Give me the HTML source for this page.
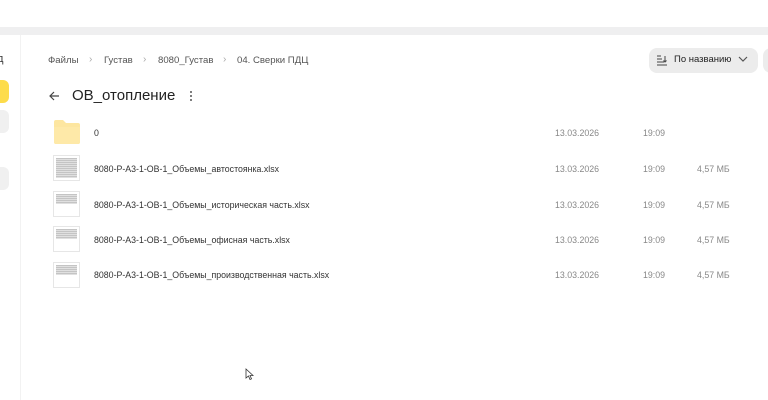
<!DOCTYPE html>
<html><head><meta charset="utf-8"><style>
*{margin:0;padding:0;box-sizing:border-box}
body{width:768px;height:400px;overflow:hidden;background:#fff;font-family:"Liberation Sans","Noto Sans CJK SC",sans-serif;position:relative;color:#222}
.a{position:absolute}
.band{left:0;top:27px;width:768px;height:8px;background:#efeff0}
.sep{left:20px;top:35px;width:1px;height:365px;background:#f2f2f2}
.crumb{top:55px;font-size:9.6px;color:#555}
.chev{top:54px;font-size:10px;color:#aaa}
.row{font-size:8.8px;color:#333}
.meta{font-size:8.8px;color:#888}
.thumb{left:53px;width:27px;height:26px;border:1px solid #e6e6e6;background:#fff}
.thumb i{position:absolute;left:2px;top:2px;width:21px;height:10px;background:repeating-linear-gradient(#c4c4c4 0 1px,#e0e0e0 1px 2px)}
</style></head><body>
<div class="a band"></div>
<div class="a sep"></div>
<div class="a" style="left:-3px;top:53px;font-size:11px;color:#333">д</div>
<div class="a" style="left:-10px;top:80px;width:19px;height:23px;border-radius:6px;background:#fddc4b"></div>
<div class="a" style="left:-10px;top:110px;width:19px;height:23px;border-radius:6px;background:#f0f0f0"></div>
<div class="a" style="left:-10px;top:167px;width:19px;height:23px;border-radius:6px;background:#f0f0f0"></div>

<div class="a crumb" style="left:48px">Файлы</div>
<div class="a chev" style="left:89px">›</div>
<div class="a crumb" style="left:104px">Густав</div>
<div class="a chev" style="left:143px">›</div>
<div class="a crumb" style="left:158px">8080_Густав</div>
<div class="a chev" style="left:223px">›</div>
<div class="a crumb" style="left:237px">04. Сверки ПДЦ</div>

<svg class="a" style="left:48px;top:90px" width="12" height="12" viewBox="0 0 12 12"><path d="M11 6H2M6 2L2 6l4 4" stroke="#444" stroke-width="1.2" fill="none"/></svg>
<div class="a" style="left:72px;top:87px;font-size:15px;color:#222">ОВ_отопление</div>
<svg class="a" style="left:189px;top:90px" width="4" height="12"><circle cx="2" cy="2" r="1" fill="#555"/><circle cx="2" cy="6" r="1" fill="#555"/><circle cx="2" cy="10" r="1" fill="#555"/></svg>

<div class="a" style="left:649px;top:48px;width:109px;height:25px;border-radius:8px;background:#ececec"></div>
<svg class="a" style="left:656px;top:54px" width="12" height="12" viewBox="0 0 12 12"><path d="M1 2h4M1 5h5M1 8h7M1 11h10M9 2v6M7.5 6.5L9 8l1.5-1.5" stroke="#444" stroke-width="1" fill="none"/></svg>
<div class="a" style="left:674px;top:54px;font-size:9.5px;color:#222">По названию</div>
<svg class="a" style="left:738px;top:56px" width="10" height="7"><path d="M1 1l4 4 4-4" stroke="#555" stroke-width="1.2" fill="none"/></svg>
<div class="a" style="left:763px;top:48px;width:20px;height:25px;border-radius:8px;background:#ececec"></div>

<svg class="a" style="left:53px;top:119px" width="28" height="26" viewBox="0 0 28 26"><path d="M1 3a2 2 0 0 1 2-2h7l3 3h12a2 2 0 0 1 2 2v17a2 2 0 0 1-2 2H3a2 2 0 0 1-2-2z" fill="#fde6a0"/><path d="M1 8h26v15a2 2 0 0 1-2 2H3a2 2 0 0 1-2-2z" fill="#fee9a8"/></svg>
<div class="a row" style="left:94px;top:128px">0</div>
<div class="a meta" style="left:555px;top:128px">13.03.2026</div>
<div class="a meta" style="left:643px;top:128px">19:09</div>

<div class="a thumb" style="top:155px"><i style="height:20px"></i></div>
<div class="a row" style="left:94px;top:164px">8080-Р-А3-1-ОВ-1_Объемы_автостоянка.xlsx</div>
<div class="a meta" style="left:555px;top:164px">13.03.2026</div><div class="a meta" style="left:643px;top:164px">19:09</div><div class="a meta" style="left:697px;top:164px">4,57 МБ</div>

<div class="a thumb" style="top:191px"><i></i></div>
<div class="a row" style="left:94px;top:200px">8080-Р-А3-1-ОВ-1_Объемы_историческая часть.xlsx</div>
<div class="a meta" style="left:555px;top:200px">13.03.2026</div><div class="a meta" style="left:643px;top:200px">19:09</div><div class="a meta" style="left:697px;top:200px">4,57 МБ</div>

<div class="a thumb" style="top:226px"><i></i></div>
<div class="a row" style="left:94px;top:235px">8080-Р-А3-1-ОВ-1_Объемы_офисная часть.xlsx</div>
<div class="a meta" style="left:555px;top:235px">13.03.2026</div><div class="a meta" style="left:643px;top:235px">19:09</div><div class="a meta" style="left:697px;top:235px">4,57 МБ</div>

<div class="a thumb" style="top:262px"><i></i></div>
<div class="a row" style="left:94px;top:270px">8080-Р-А3-1-ОВ-1_Объемы_производственная часть.xlsx</div>
<div class="a meta" style="left:555px;top:270px">13.03.2026</div><div class="a meta" style="left:643px;top:270px">19:09</div><div class="a meta" style="left:697px;top:270px">4,57 МБ</div>

<svg class="a" style="left:245px;top:368px" width="9" height="12"><path d="M1 1v9l2.5-2 1.5 3.5 1.5-.7L5 7.5h3z" fill="#fff" stroke="#333" stroke-width=".8"/></svg>
</body></html>
